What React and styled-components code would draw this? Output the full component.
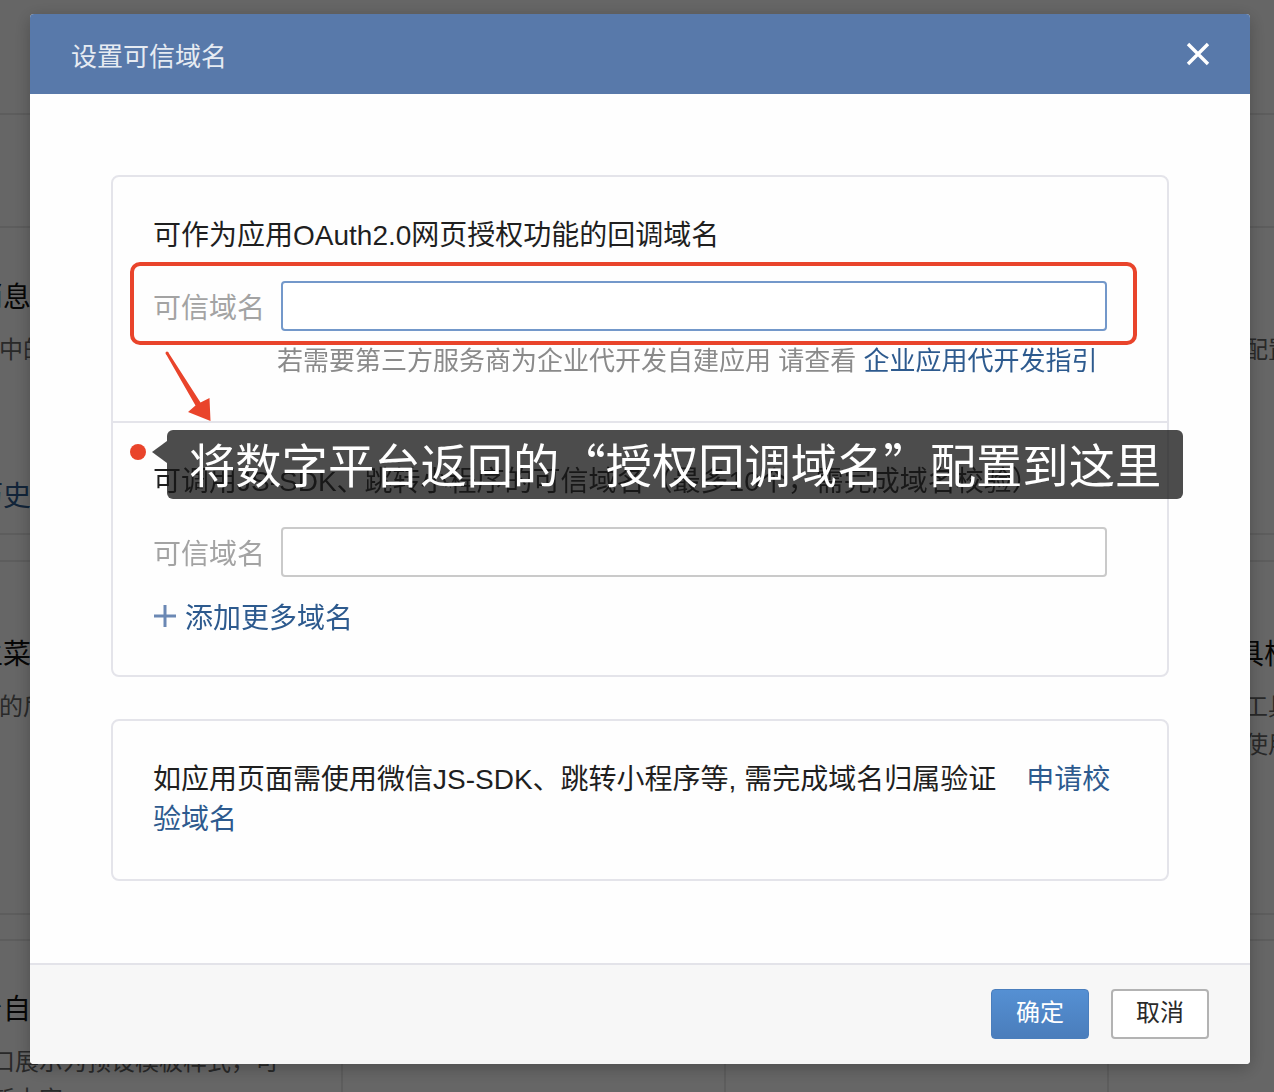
import React from 'react';
import styled, { createGlobalStyle } from 'styled-components';

const GlobalStyle = createGlobalStyle`
  html, body {
    margin: 0;
    padding: 0;
  }
  body {
    font-family: "Liberation Sans", "Noto Sans CJK SC", sans-serif;
    background: #fff;
    overflow: hidden;
  }
  * {
    box-sizing: border-box;
  }
`;

/* ---------- page underneath the modal ---------- */

const Page = styled.div`
  height: 1092px;
  overflow: hidden;
  background: #fff;
`;

const TopBand = styled.div`
  height: 115px;
  border-bottom: 2px solid #e8e8e8;
`;

const Panel = styled.section`
  margin-top: ${p => p.$gap || 0}px;
  border-top: ${p => (p.$gap ? '2px solid #e8e8e8' : 'none')};
  border-bottom: 2px solid #e8e8e8;
`;

const PanelHead = styled.div`
  height: 113px;
  border-bottom: 2px solid #e8e8e8;
  padding: 36px 60px 0;
  font-size: 30px;
  color: #222;
`;

const Tiles = styled.div`
  display: grid;
  grid-template-columns: ${p => p.$first}px repeat(3, 383px);
  margin-left: ${p => -p.$shift}px;
  height: ${p => p.$h}px;
`;

const Tile = styled.div`
  padding: ${p => p.$top}px 20px 0 15px;
  border-right: 2px solid #e8e8e8;
`;

const TileTitle = styled.div`
  font-size: 28px;
  line-height: 40px;
  color: #111;
  white-space: nowrap;
`;

const TileText = styled.div`
  margin-top: 13px;
  font-size: 24px;
  line-height: 38px;
  color: #666;
  white-space: nowrap;
`;

const TileLink = styled.div`
  margin-top: 108px;
  font-size: 28px;
  line-height: 40px;
  color: #2d5a8e;
  white-space: nowrap;
`;

/* ---------- modal ---------- */

const Overlay = styled.div`
  position: fixed;
  inset: 0;
  background: rgba(0, 0, 0, 0.6);
  display: flex;
  align-items: flex-start;
  padding: 14px 0 0 30px;
`;

const Dialog = styled.div`
  width: 1220px;
  height: 1050px;
  background: #fefefe;
  border-radius: 4px;
  overflow: hidden;
  box-shadow: 0 4px 18px rgba(0, 0, 0, 0.25);
  display: flex;
  flex-direction: column;
`;

const Header = styled.header`
  flex: none;
  height: 80px;
  background: #5879aa;
  display: flex;
  align-items: center;
  justify-content: space-between;
  padding: 0 40px 0 41px;
`;

const Title = styled.h2`
  margin: 0;
  font-size: 26px;
  font-weight: 400;
  color: #e6ebf2;
`;

const CloseButton = styled.button`
  width: 24px;
  height: 24px;
  padding: 0;
  border: none;
  background: none;
  cursor: pointer;
  display: flex;
  svg {
    display: block;
  }
`;

const Body = styled.div`
  flex: 1;
  padding: 81px 81px 0;
  display: flex;
  flex-direction: column;
  gap: 42px;
`;

const Card = styled.div`
  position: relative;
  border: 2px solid #e4e4ea;
  border-radius: 8px;
  background: #fefefe;
`;

const Block = styled.div`
  padding: 39px 60px ${p => p.$bottom}px 40px;
  & + & {
    border-top: 2px solid #e4e4ea;
  }
`;

const Heading = styled.div`
  font-size: 28px;
  line-height: 40px;
  color: #1f1f1f;
  white-space: nowrap;
`;

const FieldRow = styled.div`
  display: flex;
  align-items: center;
  margin-top: 25px;
  height: 50px;
`;

const FieldLabel = styled.label`
  flex: none;
  width: 128px;
  font-size: 28px;
  color: #a3a3a3;
`;

const Field = styled.input`
  flex: 1;
  height: 50px;
  padding: 0 12px;
  border: 2px solid ${p => (p.$active ? '#7398ca' : '#cacaca')};
  border-radius: 4px;
  background: #fff;
  font: inherit;
  font-size: 26px;
  outline: none;
`;

const Hint = styled.div`
  margin: 10px 0 0 124px;
  font-size: 26px;
  line-height: 40px;
  color: #8a8a8a;
  white-space: nowrap;
`;

const Link = styled.a`
  color: #2d5a8e;
  text-decoration: none;
  margin-left: ${p => p.$gap || 0}px;
`;

const AddMore = styled.button`
  margin-top: 19px;
  height: 40px;
  padding: 0;
  border: none;
  background: none;
  display: flex;
  align-items: center;
  gap: 8px;
  font: inherit;
  font-size: 28px;
  color: #2d5a8e;
  cursor: pointer;
`;

const Notice = styled.p`
  margin: 0;
  padding: 39px 40px;
  font-size: 28px;
  line-height: 40px;
  color: #1f1f1f;
`;

const Footer = styled.footer`
  flex: none;
  height: 101px;
  border-top: 2px solid #e3e3e9;
  background: #f7f7f7;
  display: flex;
  justify-content: flex-end;
  align-items: flex-start;
  gap: 22px;
  padding: 24px 41px 0 0;
`;

const Button = styled.button`
  width: 98px;
  height: 50px;
  border-radius: 4px;
  font: inherit;
  font-size: 24px;
  line-height: 1;
  padding: 0 0 2px;
  cursor: pointer;
  color: ${p => (p.$primary ? '#fff' : '#2a2a2a')};
  background: ${p => (p.$primary ? 'linear-gradient(#5590d3, #4a7dbb)' : '#fff')};
  border: ${p => (p.$primary ? '1px solid #4a7ebd' : '2px solid #b3b3b3')};
`;

/* ---------- call-out marks drawn over the first card ---------- */

const Highlight = styled.div`
  position: absolute;
  left: 17px;
  top: 85px;
  width: 1007px;
  height: 83px;
  border: 4px solid #e9442b;
  border-radius: 10px;
  pointer-events: none;
`;

const Arrow = styled.svg`
  position: absolute;
  left: 47px;
  top: 171px;
`;

const Dot = styled.span`
  position: absolute;
  left: 17px;
  top: 267px;
  width: 16px;
  height: 16px;
  border-radius: 50%;
  background: #e9442b;
`;

const Callout = styled.div`
  position: absolute;
  left: 54px;
  top: 253px;
  height: 69px;
  padding: 0 22px 3px;
  border-radius: 6px;
  background: rgba(22, 22, 22, 0.77);
  color: #fff;
  font-family: "Noto Sans CJK SC", sans-serif;
  font-size: 46.3px;
  line-height: 66px;
  white-space: nowrap;
  &::before {
    content: '';
    position: absolute;
    right: 100%;
    top: 11px;
    border-top: 11px solid transparent;
    border-bottom: 11px solid transparent;
    border-right: 15px solid rgba(22, 22, 22, 0.77);
  }
`;

function CloseIcon() {
  return (
    <svg width="24" height="24" viewBox="0 0 24 24">
      <path d="M2 2 L22 22 M22 2 L2 22" stroke="#fff" strokeWidth="3.4" />
    </svg>
  );
}

function PlusIcon() {
  return (
    <svg width="24" height="24" viewBox="0 0 24 24">
      <path d="M12 1 V23 M1 12 H23" stroke="#6b88b4" strokeWidth="3" />
    </svg>
  );
}

function Backdrop() {
  return (
    <Page>
      <TopBand />
      <Panel>
        <PanelHead>应用管理</PanelHead>
        <Tiles $first={383} $shift={40} $h={305}>
          <Tile $top={50}>
            <TileTitle>消息推送</TileTitle>
            <TileText>群中的新消息将同步推送给成员</TileText>
            <TileLink>历史消息</TileLink>
          </Tile>
          <Tile $top={50} />
          <Tile $top={50} />
          <Tile $top={50}>
            <TileTitle>应用配置</TileTitle>
            <TileText>在应用详情配置可见范围</TileText>
          </Tile>
        </Tiles>
      </Panel>
      <Panel $gap={25}>
        <Tiles $first={383} $shift={40} $h={351}>
          <Tile $top={73}>
            <TileTitle>主菜单</TileTitle>
            <TileText>我的后台菜单可在此设置</TileText>
          </Tile>
          <Tile $top={73} />
          <Tile $top={73} />
          <Tile $top={73}>
            <TileTitle>自定义工具栏</TileTitle>
            <TileText>
              会话中添加工具栏
              <br />
              方便所有人使用
            </TileText>
          </Tile>
        </Tiles>
      </Panel>
      <Panel $gap={24}>
        <Tiles $first={439} $shift={96} $h={300}>
          <Tile $top={49}>
            <TileTitle>工作台自定义</TileTitle>
            <TileText>
              消息窗口展示为预设模板样式，可
              <br />
              随时更新内容
            </TileText>
          </Tile>
          <Tile $top={49} />
          <Tile $top={49} />
          <Tile $top={49} />
        </Tiles>
      </Panel>
    </Page>
  );
}

export default function App() {
  return (
    <>
      <GlobalStyle />
      <Backdrop />
      <Overlay>
        <Dialog>
          <Header>
            <Title>设置可信域名</Title>
            <CloseButton aria-label="关闭">
              <CloseIcon />
            </CloseButton>
          </Header>

          <Body>
            <Card>
              <Block $bottom={40}>
                <Heading>可作为应用OAuth2.0网页授权功能的回调域名</Heading>
                <FieldRow>
                  <FieldLabel>可信域名</FieldLabel>
                  <Field type="text" $active />
                </FieldRow>
                <Hint>
                  若需要第三方服务商为企业代开发自建应用 请查看 <Link>企业应用代开发指引</Link>
                </Hint>
              </Block>
              <Block $bottom={39}>
                <Heading>可调用JS-SDK、跳转小程序的可信域名（最多10个，需完成域名校验）</Heading>
                <FieldRow>
                  <FieldLabel>可信域名</FieldLabel>
                  <Field type="text" />
                </FieldRow>
                <AddMore>
                  <PlusIcon />
                  添加更多域名
                </AddMore>
              </Block>

              <Highlight />
              <Arrow width="56" height="78" viewBox="0 0 56 78">
                <polygon
                  points="8.2,4.25 40.5,54.4 49.5,50 50.5,73 28,64 35.5,57.6 5.8,5.75"
                  fill="#e9442b"
                />
                <circle cx="7" cy="5" r="1.5" fill="#e9442b" />
              </Arrow>
              <Dot />
              <Callout>将数字平台返回的“授权回调域名”配置到这里</Callout>
            </Card>

            <Card>
              <Notice>
                如应用页面需使用微信JS-SDK、跳转小程序等, 需完成域名归属验证
                <Link $gap={30}>申请校验域名</Link>
              </Notice>
            </Card>
          </Body>

          <Footer>
            <Button $primary>确定</Button>
            <Button>取消</Button>
          </Footer>
        </Dialog>
      </Overlay>
    </>
  );
}
